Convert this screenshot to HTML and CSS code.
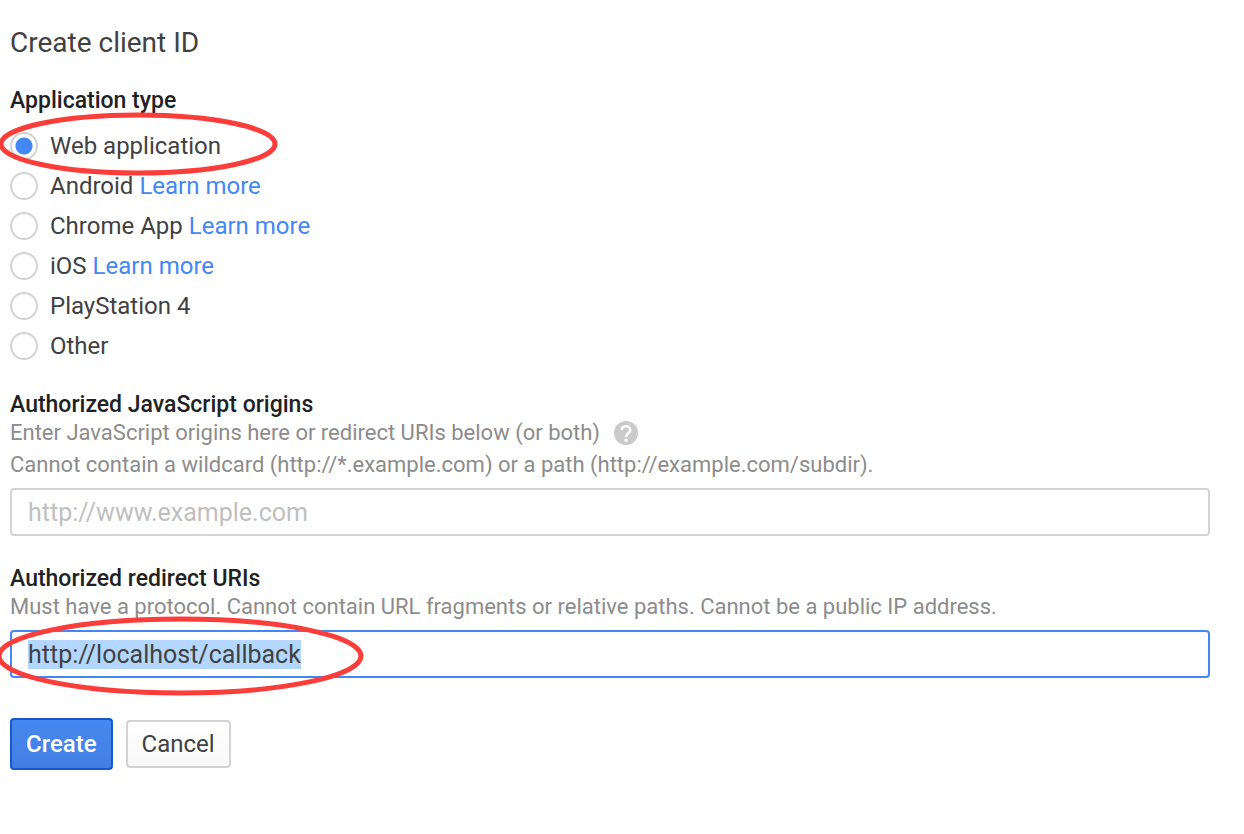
FILE: index.html
```html
<!DOCTYPE html>
<html lang="en">
<head>
<meta charset="utf-8">
<meta name="viewport" content="width=device-width, initial-scale=1">
<title>Create client ID</title>
<link rel="stylesheet" href="styles.css">
</head>
<body>
<main class="page">
  <h1 class="title">Create client ID</h1>
  <form class="form">
    <fieldset class="group">
      <legend class="heading">Application type</legend>
      <div class="options">
        <div class="option">
          <input class="radio" type="radio" name="type" id="type-web" checked>
          <label for="type-web">Web application</label>
          <svg class="mark mark-option" viewBox="0 0 282 64" aria-hidden="true"><ellipse cx="141" cy="32" rx="137" ry="29"/></svg>
        </div>
        <div class="option">
          <input class="radio" type="radio" name="type" id="type-android">
          <label for="type-android">Android</label>
          <a class="link" href="#android">Learn more</a>
        </div>
        <div class="option">
          <input class="radio" type="radio" name="type" id="type-chrome">
          <label for="type-chrome">Chrome App</label>
          <a class="link" href="#chrome">Learn more</a>
        </div>
        <div class="option">
          <input class="radio" type="radio" name="type" id="type-ios">
          <label for="type-ios">iOS</label>
          <a class="link" href="#ios">Learn more</a>
        </div>
        <div class="option">
          <input class="radio" type="radio" name="type" id="type-ps4">
          <label for="type-ps4">PlayStation 4</label>
        </div>
        <div class="option">
          <input class="radio" type="radio" name="type" id="type-other">
          <label for="type-other">Other</label>
        </div>
      </div>
    </fieldset>

    <div class="field">
      <label class="heading" for="origins">Authorized JavaScript origins</label>
      <div class="hints">
        <p class="hint">Enter JavaScript origins here or redirect URIs below (or both)
          <button class="help" type="button" aria-label="Help">
            <svg viewBox="0 0 24 24" width="24" height="24" aria-hidden="true"><circle class="help-disc" cx="12" cy="12" r="12"/><path class="help-hook" d="M7.7 9.3C7.7 6.700 9.500 5.300 12 5.300S16.300 6.900 16.300 9.100C16.300 11.900 12 12.200 12 15.900"/><circle class="help-dot" cx="12" cy="19.300" r="1.700"/></svg>
          </button>
        </p>
        <p class="hint">Cannot contain a wildcard (http://*.example.com) or a path (http://example.com/subdir).</p>
      </div>
      <input class="text" id="origins" type="text" placeholder="http://www.example.com">
    </div>

    <div class="field">
      <label class="heading" for="redirects">Authorized redirect URIs</label>
      <p class="hint">Must have a protocol. Cannot contain URL fragments or relative paths. Cannot be a public IP address.</p>
      <div class="marked">
        <input class="text" id="redirects" type="text" value="http://localhost/callback" spellcheck="false" autofocus>
        <svg class="mark mark-field" viewBox="0 0 368 80" aria-hidden="true"><ellipse cx="184" cy="40" rx="181" ry="37"/></svg>
      </div>
    </div>

    <div class="actions">
      <button class="button primary" type="submit">Create</button>
      <button class="button" type="button">Cancel</button>
    </div>
  </form>
</main>
<script src="main.js"></script>
</body>
</html>
```
FILE: styles.css
```css
* {
  box-sizing: border-box;
}

body {
  margin: 0;
  background: #fff;
  color: #414141;
  font: 24px/28px Roboto, sans-serif;
  overflow-x: hidden;
}

.page {
  padding: 27px 34px 26px 10px;
}

.title {
  margin: 0 0 28px;
  font-size: 28px;
  font-weight: 400;
  line-height: 32px;
}

.group {
  margin: 0;
  padding: 0;
  border: 0;
}

.heading {
  display: block;
  padding: 0;
  color: #212121;
  font-size: 23px;
  font-weight: 500;
  line-height: 28px;
}

.options {
  padding-top: 11px;
}

.option {
  position: relative;
  display: flex;
  align-items: center;
  gap: 6px;
  height: 40px;
}

.radio {
  appearance: none;
  flex: none;
  width: 28px;
  height: 28px;
  margin: 0 6px 0 0;
  border: 2px solid #d3d3d3;
  border-radius: 50%;
  background: #fff;
}

.radio:checked {
  background: radial-gradient(circle, #4387f4 8px, #fff 9px);
}

.link {
  color: #4387f4;
  text-decoration: none;
}

.field {
  padding-top: 25px;
}

.field + .field {
  padding-top: 29px;
}

.hints {
  display: grid;
  gap: 4px;
}

.hint {
  display: flex;
  align-items: center;
  gap: 14px;
  margin: 0;
  color: #8c8c8c;
  font-size: 22px;
  line-height: 28px;
}

.help {
  display: flex;
  padding: 0;
  border: 0;
  background: none;
}

.help-disc {
  fill: #cacaca;
}

.help-hook {
  fill: none;
  stroke: #fff;
  stroke-width: 2.6;
}

.help-dot {
  fill: #fff;
}

.text {
  display: block;
  width: 100%;
  height: 48px;
  margin-top: 9px;
  padding: 0 16px;
  border: 2px solid #d3d3d3;
  border-radius: 4px;
  outline: none;
  background: #fff;
  color: #414141;
  font: inherit;
  font-size: 25px;
}

.text::placeholder {
  color: #bfbfbf;
}

.text:focus {
  border-color: #4387f4;
}

.text::selection {
  background: #b3d7fe;
  color: #414141;
}

.marked {
  position: relative;
}

.mark {
  position: absolute;
  fill: none;
  stroke: #fc3d39;
  stroke-width: 5;
  pointer-events: none;
}

.mark-option {
  top: -14px;
  left: -13px;
  width: 282px;
}

.mark-field {
  top: -14px;
  left: -14px;
  width: 368px;
}

.actions {
  display: flex;
  align-items: center;
  gap: 13px;
  padding-top: 40px;
}

.button {
  height: 48px;
  padding: 0 14px;
  border: 2px solid #d3d3d3;
  border-radius: 4px;
  background: linear-gradient(#fff, #f8f8f8);
  color: #414141;
  font: inherit;
}

.primary {
  height: 52px;
  border-color: #1659c7;
  background: linear-gradient(#4688f1, #427fe3);
  color: #fff;
  font-weight: 500;
}
```
FILE: main.js
```js
const redirects = document.getElementById("redirects");
redirects.focus();
redirects.select();
```
